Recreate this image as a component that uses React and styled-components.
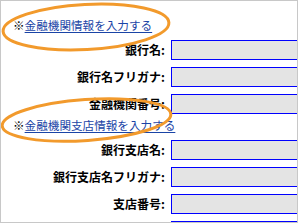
import React from "react";
import styled, { createGlobalStyle } from "styled-components";

const GlobalStyle = createGlobalStyle`
  html, body {
    margin: 0;
    padding: 0;
    background: #fff;
  }
  body {
    font-family: "Noto Sans CJK JP", "Noto Sans", sans-serif;
  }
`;

const bankFields = ["銀行名:", "銀行名フリガナ:", "金融機関番号:"];
const branchFields = ["銀行支店名:", "銀行支店名フリガナ:", "支店番号:", ""];

const App = () => {
  return (
    <>
      <GlobalStyle />
      <FrameStyled>
        <Section>
          <LinkRow>
            <span className="mark">※</span>
            <a href="#bank">金融機関情報を入力する</a>
          </LinkRow>
          <Fields>
            {bankFields.map((label) => (
              <FieldRow key={label}>
                <Label>{label}</Label>
                <Input type="text" />
              </FieldRow>
            ))}
          </Fields>
        </Section>
        <Section $top={1}>
          <LinkRow>
            <span className="mark">※</span>
            <a href="#branch">金融機関支店情報を入力する</a>
          </LinkRow>
          <Fields>
            {branchFields.map((label, i) => (
              <FieldRow key={i}>
                <Label>{label}</Label>
                <Input type="text" />
              </FieldRow>
            ))}
          </Fields>
        </Section>
        <Marks viewBox="0 0 298 224" aria-hidden="true">
          <ellipse cx="86" cy="27" rx="83" ry="22.5" transform="rotate(-3 86 27)" />
          <ellipse cx="86.5" cy="120" rx="84.5" ry="20.5" transform="rotate(-4 86.5 120)" />
        </Marks>
      </FrameStyled>
    </>
  );
};

const FrameStyled = styled.div`
  position: relative;
  box-sizing: border-box;
  width: 298px;
  height: 223px;
  padding-top: 14px;
  border: 1px solid #c8c8c8;
  overflow: hidden;
  background: #fff;
`;

const Section = styled.div`
  margin-top: ${({ $top }) => ($top ? `${$top}px` : "0")};
`;

const LinkRow = styled.div`
  display: flex;
  align-items: center;
  height: 22px;
  padding-left: 12px;
  font-size: 11.6px;
  line-height: 1;
  .mark {
    color: #000;
  }
  a {
    color: #1a44a6;
    text-decoration: underline;
    text-underline-offset: 2px;
  }
`;

const Fields = styled.div`
  display: flex;
  flex-direction: column;
  gap: 7px;
  margin-top: 3px;
`;

const FieldRow = styled.div`
  display: grid;
  grid-template-columns: 164px 150px;
  column-gap: 6px;
  align-items: center;
  height: 20px;
`;

const Label = styled.label`
  text-align: right;
  font-size: 12px;
  font-weight: 700;
  color: #000;
  white-space: nowrap;
  line-height: 1;
`;

const Input = styled.input`
  box-sizing: border-box;
  width: 150px;
  height: 20px;
  margin: 0;
  padding: 0 3px;
  border: 1px solid #0000ff;
  background: #e4e4e4;
  outline: none;
`;

const Marks = styled.svg`
  position: absolute;
  left: -1px;
  top: -1px;
  width: 298px;
  height: 224px;
  pointer-events: none;
  ellipse {
    fill: none;
    stroke: #f29a2c;
    stroke-width: 3;
  }
`;

export default App;
